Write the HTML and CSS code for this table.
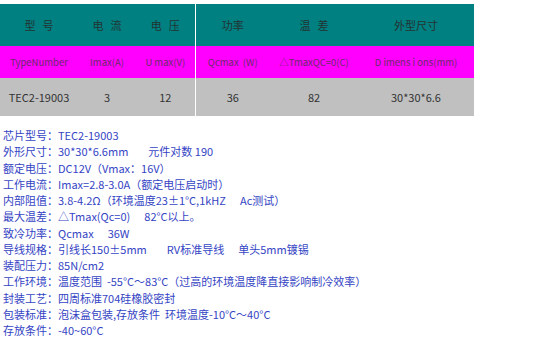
FILE: index.html
```html
<!DOCTYPE html>
<html>
<head>
<meta charset="utf-8">
<link rel="stylesheet" href="styles.css">
</head>
<body>
<table class="spec">
  <colgroup>
    <col class="c1"><col class="c2"><col class="c3"><col class="c4"><col class="c5"><col class="c6">
  </colgroup>
  <tr class="head">
    <td><span class="sp">型</span>号</td><td><span class="sp">电</span>流</td><td class="sep"><span class="sp">电</span>压</td><td>功率</td><td><span class="sp">温</span>差</td><td>外型尺寸</td>
  </tr>
  <tr class="sub">
    <td>TypeNumber</td><td>Imax(A)</td><td class="sep">U&nbsp;max(V)</td><td>Qcmax&nbsp;&nbsp;(W)</td><td>△TmaxQC=0(C)</td><td>D&nbsp;imens&nbsp;i&nbsp;ons(mm)</td>
  </tr>
  <tr class="val">
    <td>TEC2-19003</td><td>3</td><td class="sep">12</td><td>36</td><td>82</td><td>30*30*6.6</td>
  </tr>
</table>
<div class="info">
  <p>芯片型号：TEC2-19003</p>
  <p>外形尺寸：30*30*6.6mm<span class="gap"></span>元件对数 190</p>
  <p>额定电压：DC12V（Vmax：16V）</p>
  <p>工作电流：Imax=2.8-3.0A（额定电压启动时）</p>
  <p>内部阻值：3.8-4.2Ω（环境温度23±1°C,1kHZ<span class="gap-s"></span>Ac测试）</p>
  <p>最大温差：△Tmax(Qc=0)<span class="gap-s"></span>82°C以上。</p>
  <p>致冷功率：Qcmax<span class="gap-s"></span>36W</p>
  <p>导线规格：引线长150±5mm<span class="gap"></span>RV标准导线<span class="gap-s"></span>单头5mm镀锡</p>
  <p>装配压力：85N/cm2</p>
  <p>工作环境：温度范围 &nbsp;-55°C～83°C（过高的环境温度降直接影响制冷效率）</p>
  <p>封装工艺：四周标准704硅橡胶密封</p>
  <p>包装标准：泡沫盒包装,存放条件 &nbsp;环境温度-10°C～40°C</p>
  <p>存放条件：-40~60°C</p>
</div>
</body>
</html>
```
FILE: styles.css
```css
html, body {
  margin: 0;
  padding: 0;
  background: #ffffff;
}
body {
  padding-top: 4px;
  font-family: "Noto Sans CJK SC", sans-serif;
}
.spec {
  border-collapse: collapse;
  table-layout: fixed;
  width: 474px;
}
.c1 { width: 78px; }
.c2 { width: 58px; }
.c3 { width: 59px; }
.c4 { width: 75px; }
.c5 { width: 88px; }
.c6 { width: 116px; }
.spec td {
  padding: 0;
  text-align: center;
  white-space: nowrap;
  overflow: hidden;
}
.spec td.sep {
  border-right: 1px solid #ffffff;
}
.head td {
  height: 42px;
  background: #008080;
  color: #223333;
  font-size: 11px;
}
.sp {
  margin-right: 7px;
}
.sub td {
  height: 32px;
  background: #ff00ff;
  color: #6a2a6a;
  font-size: 9.5px;
}
.val td {
  height: 38px;
  background: #c0c0c0;
  color: #333333;
  font-size: 11px;
}
.info {
  padding: 11px 0 0 3px;
  color: #3444c4;
  font-size: 11px;
}
.info p {
  margin: 0;
  height: 16.25px;
  line-height: 16.25px;
  white-space: nowrap;
}
.gap {
  display: inline-block;
  width: 20px;
}
.gap-s {
  display: inline-block;
  width: 14px;
}
```
